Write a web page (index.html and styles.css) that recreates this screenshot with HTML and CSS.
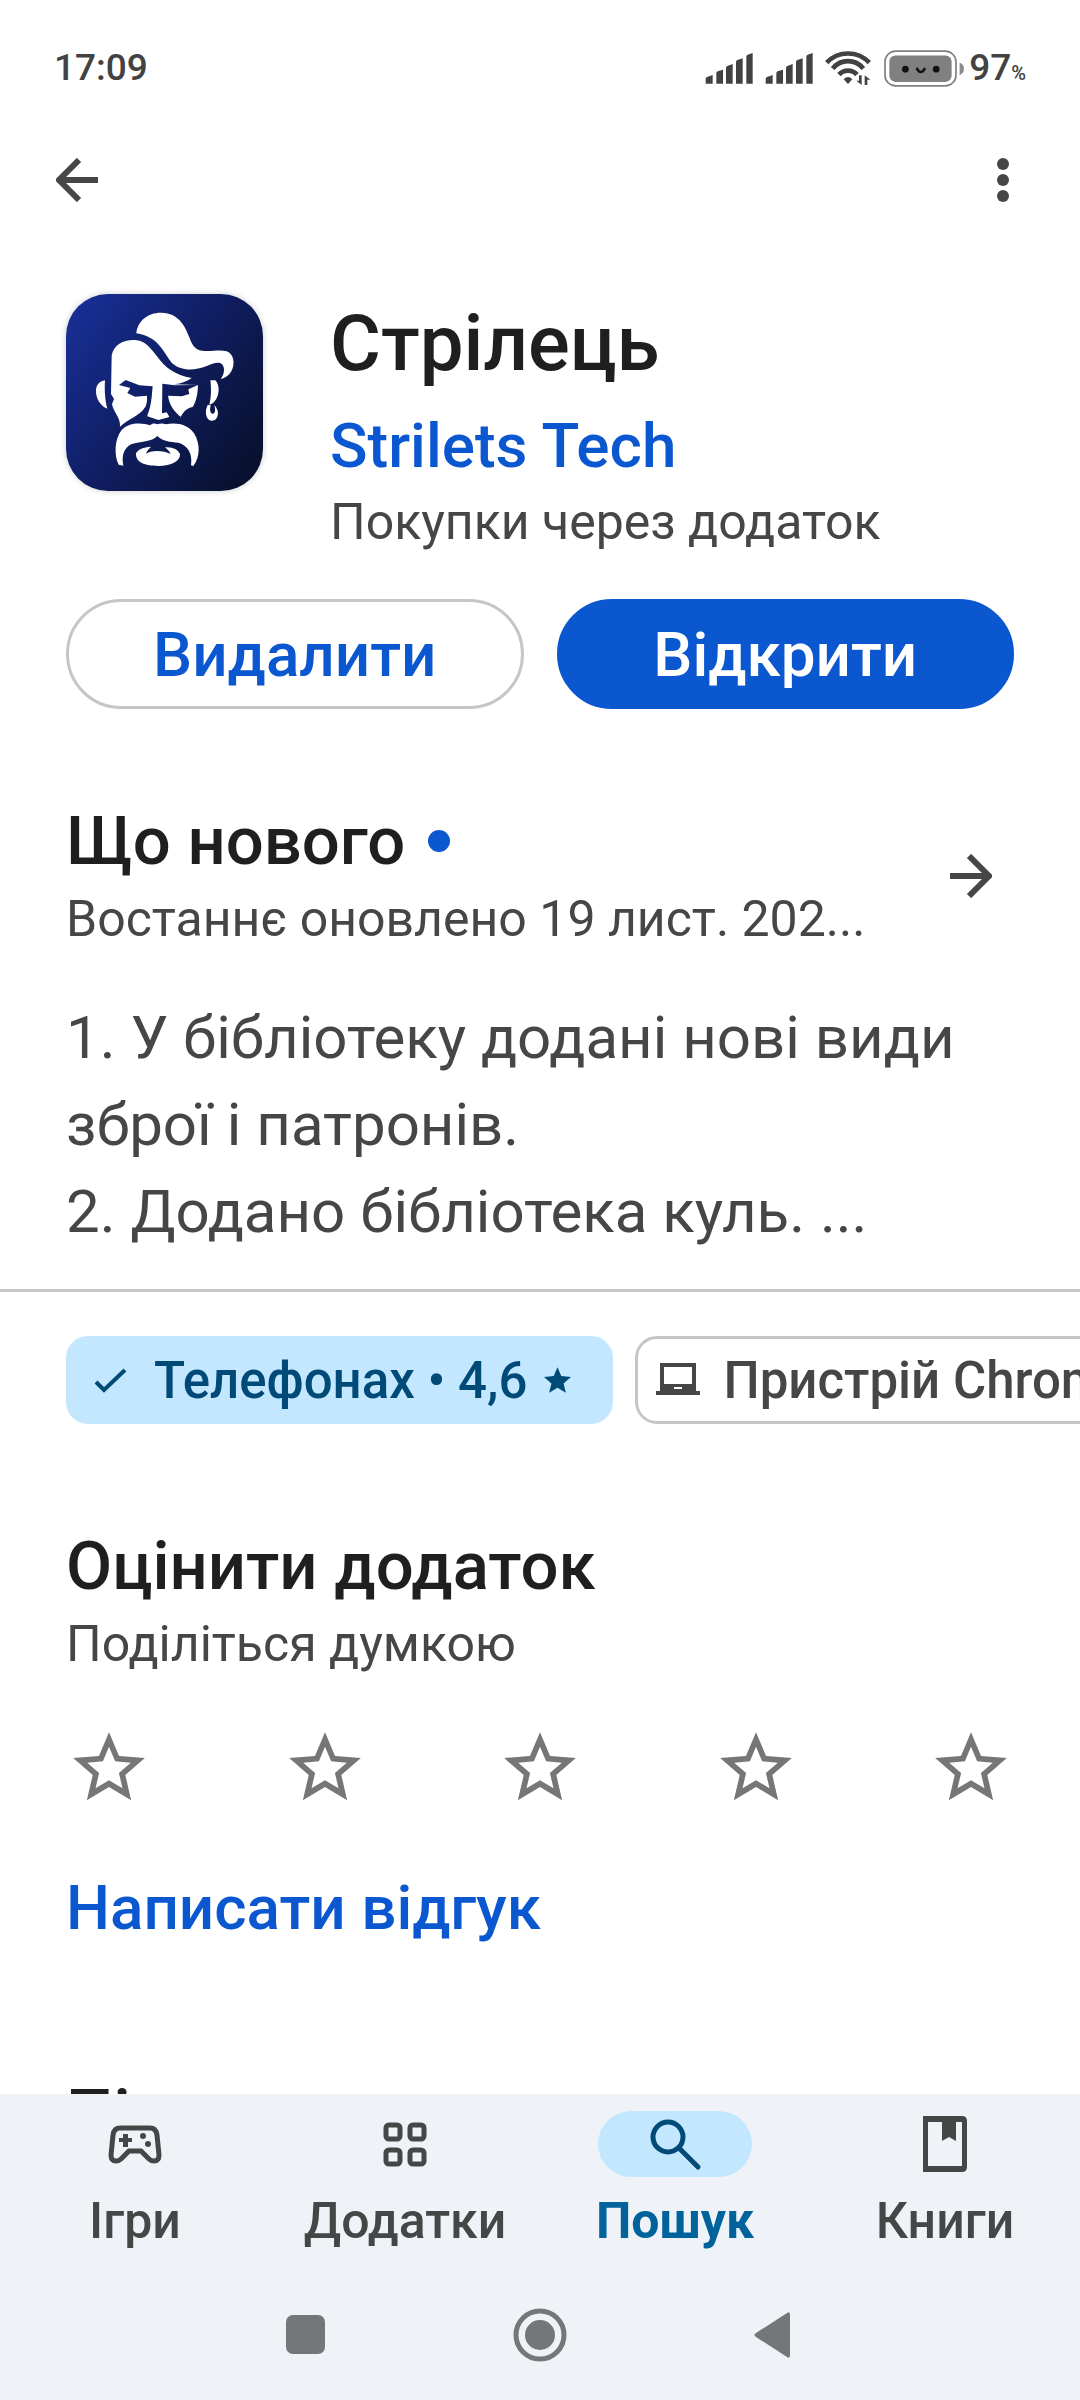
FILE: index.html
```html
<!DOCTYPE html>
<html lang="uk">
<head>
    <meta charset="UTF-8">
    <meta name="viewport" content="width=device-width, initial-scale=1.0">
    <title>Стрілець</title>
    <link rel="stylesheet" href="styles.css">
</head>
<body>

<!-- Рядок стану -->
<div class="status-bar">
    <span class="time">17:09</span>
    <div class="status-icons">
        <svg class="signal" viewBox="75 94 144 93"><path d="M77 186v-14q0-4 4-6l17-6v26zM109 186v-31q0-4 4-6l16-5v42zM138 186v-47q0-4 4-6l16-6v59zM168 186v-65q0-4 4-6l16-5v76zM199 186V105q0-4 4-6l15-5v92z"/></svg>
        <svg class="signal" viewBox="75 94 144 93"><path d="M77 186v-14q0-4 4-6l17-6v26zM109 186v-31q0-4 4-6l16-5v42zM138 186v-47q0-4 4-6l16-6v59zM168 186v-65q0-4 4-6l16-5v76zM199 186V105q0-4 4-6l15-5v92z"/></svg>
        <svg class="wifi" viewBox="437 87 141 108">
            <g fill="none" stroke="#424242" stroke-width="14"><path d="M442 125A88 88 0 0 1 570 125M460 143A58 58 0 0 1 552 143M479 161A36 36 0 0 1 533 161"/></g>
            <path d="M493 175q13-14 26 0l-13 14zM539 163h8v29l-16-13h8zM564 192h-8v-29l17 13h-9z"/>
        </svg>
        <svg class="battery" viewBox="612 83 242 110">
            <rect x="615" y="86" width="212" height="104" rx="32" fill="none" stroke="#808080" stroke-width="5"/>
            <rect x="628" y="99" width="186" height="79" rx="18" fill="#808080"/>
            <path d="M838 120q13 6 13 19t-13 19z" fill="#8c8c8c"/>
            <circle cx="676" cy="140" r="10" fill="#111"/><circle cx="768" cy="140" r="10" fill="#111"/>
            <path d="M711 139q11 19 22 0" fill="none" stroke="#111" stroke-width="8" stroke-linecap="round"/>
        </svg>
        <span class="charge">97<small>%</small></span>
    </div>
</div>

<!-- Верхня панель -->
<header class="toolbar">
    <button type="button" class="icon-btn" aria-label="Назад">
        <svg viewBox="0 0 42 44"><path d="M23 2L3 22l20 20M4 22h38" fill="none" stroke="#444746" stroke-width="6"/></svg>
    </button>
    <button type="button" class="icon-btn more" aria-label="Більше">
        <svg viewBox="0 0 12 44"><circle cx="6" cy="6" r="6"/><circle cx="6" cy="22" r="6"/><circle cx="6" cy="38" r="6"/></svg>
    </button>
</header>

<main class="content">
    <section class="app-info">
        <svg class="app-icon" viewBox="48 40 591 591" role="img" aria-label="Логотип">
            <defs>
                <linearGradient id="navy" gradientUnits="userSpaceOnUse" x1="60" y1="120" x2="620" y2="520">
                    <stop offset="0" stop-color="#182e93"/>
                    <stop offset="0.45" stop-color="#101f66"/>
                    <stop offset="1" stop-color="#08112f"/>
                </linearGradient>
            </defs>
            <rect x="48" y="40" width="591" height="591" fill="url(#navy)"/>
            <g fill="#fff">
                <!-- чуб -->
                <path d="M259 158C262 120 295 95 335 96C385 97 405 135 418 170C428 200 440 211 465 211C490 212 510 206 530 212C552 220 556 250 544 272C536 285 525 292 512 296C523 280 526 262 516 251C505 242 490 248 470 256C430 272 390 270 365 246C340 215 325 167 259 158Z"/>
                <!-- обличчя -->
                <path d="M185 225C190 190 225 176 255 178C285 180 300 200 322 228C345 260 375 283 425 292C412 302 395 308 372 311L444 313C443 345 437 365 428 379C410 382 402 392 390 412L361 400L356 410L325 418L292 407L285 380C270 405 235 415 210 438C212 410 190 395 186 370L192 355L183 340Z"/>
                <!-- вуха та сережка -->
                <path d="M165 299C142 303 135 320 139 342C143 362 155 376 172 384C165 360 163 325 165 299Z"/>
                <path d="M481 299L496 299C507 310 508 330 503 345C498 360 488 370 478 372C484 350 484 320 481 299Z"/>
                <path d="M473 373C464 390 466 415 482 420C498 423 507 405 503 390Q500 379 493 374C499 395 492 400 487 399C480 398 479 385 482 374Z"/>
                <!-- вуса -->
                <path d="M322 466C305 485 270 482 245 490C222 500 214 525 220 555L206 552C192 525 193 475 215 448C235 425 275 425 300 434C308 427 314 428 322 431C330 428 340 428 348 431C380 424 415 432 432 458C452 490 450 530 430 556L423 554C428 520 415 495 385 486C360 484 338 482 322 466Z"/>
                <path d="M258 518C265 505 280 500 303 498C296 505 291 510 288 520C300 508 340 508 362 520C358 510 350 505 345 500C370 498 385 508 390 520C392 540 365 556 325 556C285 556 256 545 258 518Z"/>
            </g>
            <g fill="url(#navy)">
                <!-- брови та очі -->
                <path d="M207 313L227 298L268 314L308 317L305 350C302 375 298 390 291 407L278 412L280 390C290 375 292 362 291 345L255 348L232 337L241 322Z"/>
                <path d="M337 309L375 314L444 313L415 326L418 340L395 347L354 345C358 375 375 395 394 410L380 418L358 408L350 395L336 398Z"/>
            </g>
        </svg>
        <div class="app-titles">
            <h1>Стрілець</h1>
            <a href="#" class="developer">Strilets Tech</a>
            <p class="sub">Покупки через додаток</p>
        </div>
    </section>

    <div class="actions">
        <button type="button" class="btn btn-outline">Видалити</button>
        <button type="button" class="btn btn-primary">Відкрити</button>
    </div>

    <!-- Що нового -->
    <section class="whats-new">
        <div class="section-head">
            <div class="section-titles">
                <h2>Що нового <span class="dot"></span></h2>
                <p class="sub">Востаннє оновлено 19 лист. 202...</p>
            </div>
            <button type="button" class="icon-btn arrow" aria-label="Докладніше">
                <svg viewBox="0 0 42 44"><path d="M19 2l20 20-20 20M38 22H0" fill="none" stroke="#444746" stroke-width="6"/></svg>
            </button>
        </div>
        <p class="changes">1. У бібліотеку додані нові види<br>зброї і патронів.<br>2. Додано бібліотека куль. ...</p>
    </section>

    <div class="chips">
        <button type="button" class="chip chip-active">
            <svg class="chip-icon" viewBox="0 0 44 44"><path d="M9 24l8 8 21-20" fill="none" stroke="#004a77" stroke-width="4"/></svg>
            <span>Телефонах • 4,6</span>
            <svg class="chip-star" viewBox="2 2 20 19"><path d="M12 17.3l6.2 3.7-1.7-7L22 9.2l-7.2-.6L12 2 9.2 8.6 2 9.2l5.5 4.8L5.8 21z"/></svg>
        </button>
        <button type="button" class="chip">
            <svg class="chip-icon" viewBox="0 0 44 44"><path fill-rule="evenodd" d="M4 5h36v28h4v4H0v-4h4zM8 9v17h28V9zM18 29h8v2h-8z"/></svg>
            <span>Пристрій Chromebook</span>
        </button>
    </div>

    <!-- Оцінка -->
    <section class="rate">
        <h2>Оцінити додаток</h2>
        <p class="sub">Поділіться думкою</p>
        <div class="stars">
            <label><input type="radio" name="rating" value="1" aria-label="1 зірка"><svg viewBox="0 0 24 24"><path d="M22 9.24l-7.19-.62L12 2 9.19 8.63 2 9.24l5.46 4.73L5.82 21 12 17.27 18.18 21l-1.63-7.03zM12 15.4l-3.76 2.27 1-4.28-3.32-2.88 4.38-.38L12 6.1l1.71 4.04 4.38.38-3.32 2.88 1 4.28z"/></svg></label>
            <label><input type="radio" name="rating" value="2" aria-label="2 зірки"><svg viewBox="0 0 24 24"><path d="M22 9.24l-7.19-.62L12 2 9.19 8.63 2 9.24l5.46 4.73L5.82 21 12 17.27 18.18 21l-1.63-7.03zM12 15.4l-3.76 2.27 1-4.28-3.32-2.88 4.38-.38L12 6.1l1.71 4.04 4.38.38-3.32 2.88 1 4.28z"/></svg></label>
            <label><input type="radio" name="rating" value="3" aria-label="3 зірки"><svg viewBox="0 0 24 24"><path d="M22 9.24l-7.19-.62L12 2 9.19 8.63 2 9.24l5.46 4.73L5.82 21 12 17.27 18.18 21l-1.63-7.03zM12 15.4l-3.76 2.27 1-4.28-3.32-2.88 4.38-.38L12 6.1l1.71 4.04 4.38.38-3.32 2.88 1 4.28z"/></svg></label>
            <label><input type="radio" name="rating" value="4" aria-label="4 зірки"><svg viewBox="0 0 24 24"><path d="M22 9.24l-7.19-.62L12 2 9.19 8.63 2 9.24l5.46 4.73L5.82 21 12 17.27 18.18 21l-1.63-7.03zM12 15.4l-3.76 2.27 1-4.28-3.32-2.88 4.38-.38L12 6.1l1.71 4.04 4.38.38-3.32 2.88 1 4.28z"/></svg></label>
            <label><input type="radio" name="rating" value="5" aria-label="5 зірок"><svg viewBox="0 0 24 24"><path d="M22 9.24l-7.19-.62L12 2 9.19 8.63 2 9.24l5.46 4.73L5.82 21 12 17.27 18.18 21l-1.63-7.03zM12 15.4l-3.76 2.27 1-4.28-3.32-2.88 4.38-.38L12 6.1l1.71 4.04 4.38.38-3.32 2.88 1 4.28z"/></svg></label>
        </div>
        <a href="#" class="review-link">Написати відгук</a>
    </section>

    <section class="support">
        <h2>Підтримка додатка</h2>
    </section>
</main>

<!-- Нижня навігація -->
<nav class="bottom-nav">
    <a href="#" class="nav-item">
        <span class="nav-icon"><svg viewBox="0 0 66 66">
            <path d="M18 17h30q6 0 7 7l2 20q0 6-5 6-3 0-5-2l-8-8H27l-8 8q-2 2-5 2-5 0-5-6l2-20q1-7 7-7z" fill="none" stroke="#444746" stroke-width="5"/>
            <path d="M21 23h5v4h4v4h-4v5h-5v-5h-4v-4h4z"/><circle cx="41" cy="25" r="3"/><circle cx="46" cy="33" r="3"/>
        </svg></span>
        <span>Ігри</span>
    </a>
    <a href="#" class="nav-item">
        <span class="nav-icon"><svg viewBox="0 0 66 66">
            <g fill="none" stroke="#444746" stroke-width="5"><rect x="14" y="14" width="14" height="14" rx="3"/><rect x="38" y="14" width="14" height="14" rx="3"/><rect x="14" y="39" width="14" height="14" rx="3"/><rect x="38" y="39" width="14" height="14" rx="3"/></g>
        </svg></span>
        <span>Додатки</span>
    </a>
    <a href="#" class="nav-item active">
        <span class="nav-icon"><svg viewBox="0 0 66 66">
            <g fill="none" stroke="#004a77" stroke-width="5"><circle cx="26" cy="26" r="15"/><path d="M37 37l19 19" stroke-linecap="round"/></g>
        </svg></span>
        <span>Пошук</span>
    </a>
    <a href="#" class="nav-item">
        <span class="nav-icon"><svg viewBox="0 0 66 66">
            <path fill-rule="evenodd" d="M11 5h39q5 0 5 5v46q0 5-5 5H11zM16 11v44h34V11h-6v19l-7-4-7 4V11z"/>
        </svg></span>
        <span>Книги</span>
    </a>
</nav>

<div class="system-nav">
    <button type="button" aria-label="Останні"><svg viewBox="0 0 54 54"><rect x="7" y="7" width="39" height="39" rx="7"/></svg></button>
    <button type="button" aria-label="Додому"><svg viewBox="0 0 54 54"><circle cx="27" cy="27" r="24" fill="none" stroke="#757678" stroke-width="5"/><circle cx="27" cy="27" r="15"/></svg></button>
    <button type="button" aria-label="Назад"><svg viewBox="0 0 54 54"><path d="M9 25L40 5q3-2 3 2v40q0 4-3 2L9 29q-3-2 0-4z"/></svg></button>
</div>

</body>
</html>
```

FILE: styles.css
```css
* {
    box-sizing: border-box;
}
body {
    margin: 0;
    height: 100vh;
    display: flex;
    flex-direction: column;
    overflow: hidden;
    background-color: #fff;
    color: #1f1f1f;
    font-family: Roboto, "Noto Sans", sans-serif;
}
h1, h2, p {
    margin: 0;
}
h1, h2 {
    font-weight: 500;
}
a {
    text-decoration: none;
}
button {
    font-family: inherit;
    padding: 0;
    border: none;
    background: none;
    cursor: pointer;
}
svg {
    display: block;
    fill: #444746;
}

/* Рядок стану */
.status-bar {
    display: flex;
    justify-content: space-between;
    flex-shrink: 0;
    height: 136px;
    padding: 46px 54px 0;
    color: #424242;
    font-size: 37px;
    font-weight: 500;
    line-height: 44px;
}
.status-icons {
    display: flex;
    align-items: center;
    height: 44px;
    gap: 12px;
}
.signal {
    width: 48px;
    height: 31px;
    fill: #424242;
}
.wifi {
    width: 47px;
    height: 36px;
    fill: #424242;
}
.battery {
    width: 81px;
    height: 37px;
}
.charge {
    margin-left: -8px;
}
.charge small {
    font-size: 20px;
    line-height: 20px;
}

/* Верхня панель */
.toolbar {
    display: flex;
    justify-content: space-between;
    flex-shrink: 0;
    height: 88px;
    padding: 0 54px 0 56px;
}
.icon-btn {
    display: flex;
    align-items: center;
    justify-content: center;
}
.icon-btn svg {
    height: 44px;
}
.more {
    padding-right: 17px;
}
.arrow {
    width: 86px;
    height: 86px;
}

.content {
    flex: 1;
    min-height: 0;
    overflow: hidden;
    padding-top: 70px;
}
.app-info {
    display: flex;
    align-items: flex-start;
    gap: 67px;
    padding: 0 66px;
}
.app-icon {
    width: 197px;
    height: 197px;
    flex-shrink: 0;
    border-radius: 42px;
    box-shadow: 0 0 6px rgba(0, 0, 0, 0.2);
}
h1 {
    font-size: 78px;
    line-height: 100px;
}
.developer {
    display: block;
    color: #0b57d0;
    font-size: 62px;
    font-weight: 500;
    line-height: 104px;
}
.sub {
    color: #444746;
    font-size: 50px;
    line-height: 70px;
    white-space: nowrap;
}
.app-titles .sub {
    line-height: 48px;
}
.actions {
    display: flex;
    gap: 33px;
    padding: 53px 66px 0;
}
.btn {
    flex: 1;
    height: 110px;
    border: 3px solid #0b57d0;
    border-radius: 55px;
    font-size: 62px;
    font-weight: 500;
}
.btn-outline {
    border-color: #c4c7c5;
    color: #0b57d0;
}
.btn-primary {
    background-color: #0b57d0;
    color: #fff;
}

/* Що нового */
.whats-new {
    padding: 89px 66px 34px;
    border-bottom: 3px solid #c7c7c7;
}
.section-head {
    display: flex;
    align-items: center;
    justify-content: space-between;
}
h2 {
    font-size: 67px;
    line-height: 86px;
}
.section-titles h2 {
    display: flex;
    align-items: center;
    gap: 23px;
}
.dot {
    width: 22px;
    height: 22px;
    border-radius: 50%;
    background-color: #0b57d0;
}
.changes {
    margin-top: 40px;
    color: #444746;
    font-size: 60px;
    line-height: 87px;
    white-space: nowrap;
}

.chips {
    display: flex;
    gap: 22px;
    padding: 44px 0 0 66px;
}
.chip {
    display: flex;
    align-items: center;
    flex-shrink: 0;
    height: 88px;
    padding: 0 39px 0 18px;
    border: 3px solid #c4c7c5;
    border-radius: 22px;
    color: #444746;
    font-size: 51px;
    font-weight: 500;
    white-space: nowrap;
}
.chip-active {
    border-color: #c2e7ff;
    background-color: #c2e7ff;
    color: #004a77;
}
.chip-icon {
    width: 44px;
    height: 44px;
    margin-right: 23px;
}
.chip-star {
    width: 27px;
    height: 26px;
    margin-left: 17px;
    fill: #004a77;
}

/* Оцінка */
.rate {
    padding: 99px 66px 0;
}
.stars {
    display: flex;
    justify-content: space-between;
    margin-top: 46px;
}
.stars label {
    position: relative;
    cursor: pointer;
}
.stars input {
    position: absolute;
    opacity: 0;
}
.stars svg {
    width: 86px;
    height: 86px;
    fill: #747775;
}
.review-link {
    display: block;
    margin-top: 54px;
    color: #0b57d0;
    font-size: 62px;
    font-weight: 500;
    line-height: 86px;
}
.support {
    padding: 120px 66px 0;
}

/* Нижня навігація */
.bottom-nav {
    display: flex;
    flex-shrink: 0;
    height: 192px;
    padding-top: 17px;
    background-color: #eff3f8;
}
.nav-item {
    flex: 1;
    display: flex;
    flex-direction: column;
    align-items: center;
    gap: 14px;
    color: #444746;
    font-size: 50px;
    font-weight: 500;
    line-height: 60px;
}
.nav-icon {
    width: 154px;
    height: 66px;
    border-radius: 33px;
}
.nav-icon svg {
    width: 66px;
    height: 66px;
    margin: 0 auto;
}
.active {
    color: #00639b;
    font-weight: 700;
}
.active .nav-icon {
    background-color: #c2e7ff;
}
.system-nav {
    display: flex;
    align-items: center;
    justify-content: center;
    flex-shrink: 0;
    gap: 180px;
    height: 114px;
    padding-bottom: 16px;
    background-color: #eff3f8;
}
.system-nav svg {
    width: 54px;
    height: 54px;
    fill: #757678;
}
```
